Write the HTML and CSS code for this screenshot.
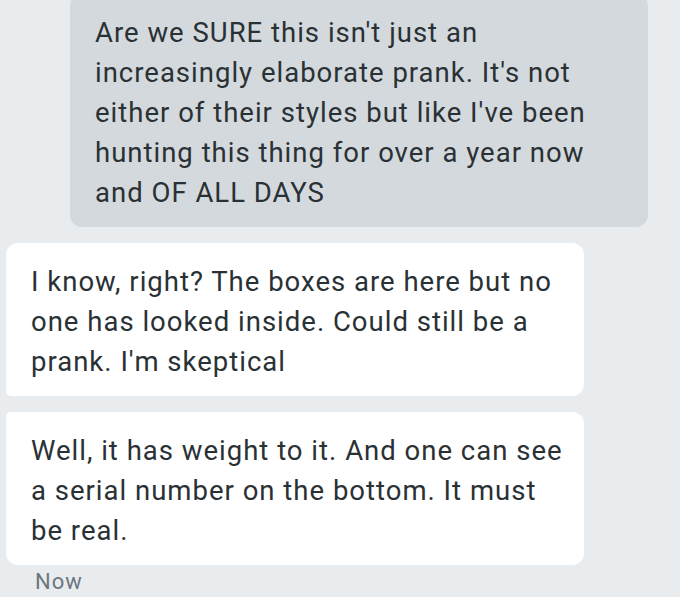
FILE: index.html
```html
<!DOCTYPE html>
<html>
<head>
<meta charset="utf-8">
<link rel="stylesheet" href="styles.css">
</head>
<body>
<div class="thread">
  <div class="bubble sent">Are we SURE this isn't just an increasingly elaborate prank. It's not either of their styles but like I've been hunting this thing for over a year now and OF ALL DAYS</div>
  <div class="bubble received first">I know, right? The boxes are here but no one has looked inside. Could still be a prank. I'm skeptical</div>
  <div class="bubble received last">Well, it has weight to it. And one can see a serial number on the bottom. It must be real.</div>
  <div class="time">Now</div>
</div>
</body>
</html>
```

FILE: styles.css
```css
html, body {
  margin: 0;
  padding: 0;
  background: #e9ecef;
}
body {
  width: 680px;
  height: 597px;
  overflow: hidden;
  font-family: Roboto, "Noto Sans", sans-serif;
  color: #2a3135;
}
.thread {
  display: flex;
  flex-direction: column;
  gap: 16px;
  margin-top: -6px;
}
.bubble {
  box-sizing: border-box;
  width: 578px;
  padding: 19px 16px 14px 25px;
  font-size: 27.5px;
  line-height: 40px;
  letter-spacing: 1px;
  border-radius: 12px;
}
.sent {
  align-self: flex-end;
  margin-right: 32px;
  background: #d3d9dd;
}
.received {
  align-self: flex-start;
  margin-left: 6px;
  background: #ffffff;
}
.received.first {
  border-bottom-left-radius: 5px;
}
.received.last {
  border-top-left-radius: 5px;
}
.time {
  margin: -15px 0 0 35px;
  font-size: 22px;
  line-height: 32px;
  letter-spacing: 1px;
  color: #6b767e;
}
```
